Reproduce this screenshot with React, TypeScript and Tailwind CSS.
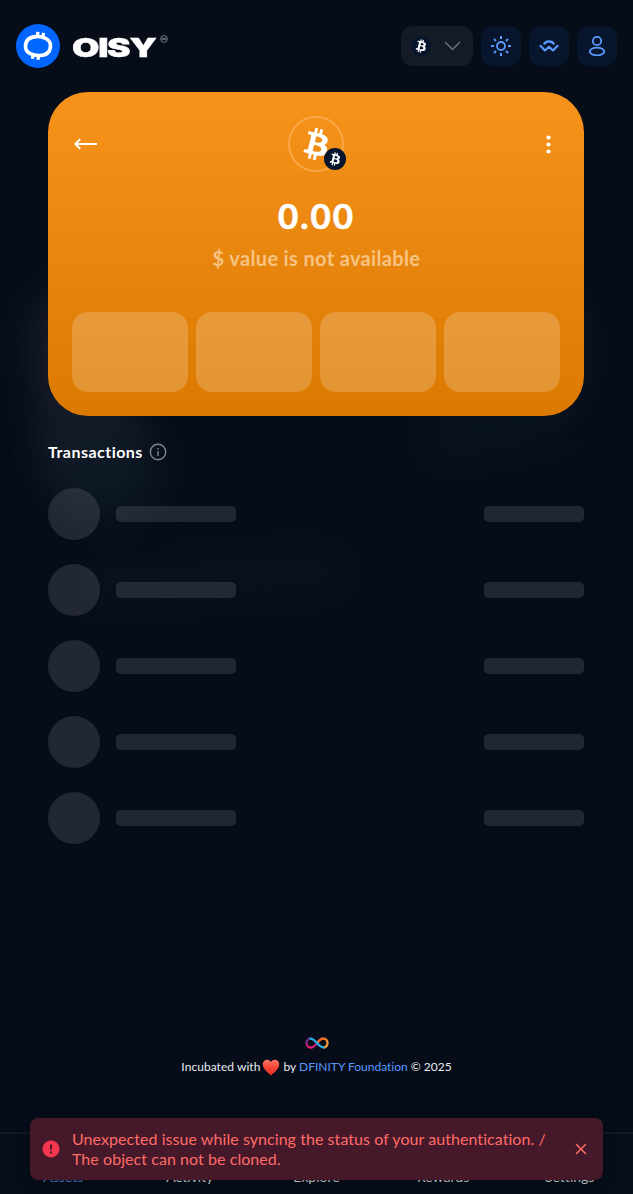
import React from 'react';

function BitcoinMark({ className }: { className?: string }) {
  return (
    <svg viewBox="0 0 32 32" fill="currentColor" className={className} aria-hidden="true">
      <path
        fillRule="evenodd"
        d="M23.189 14.02c.314-2.096-1.283-3.223-3.465-3.975l.708-2.84-1.728-.43-.69 2.765c-.454-.114-.92-.22-1.385-.326l.695-2.783L15.596 6l-.708 2.839c-.376-.086-.746-.17-1.104-.26l.002-.009-2.384-.595-.46 1.846s1.283.294 1.256.312c.7.175.826.638.805 1.006l-.806 3.235c.048.012.11.03.18.057l-.183-.045-1.13 4.532c-.086.212-.303.531-.793.41.018.025-1.256-.313-1.256-.313l-.858 1.978 2.25.561c.418.105.828.215 1.231.318l-.715 2.872 1.727.43.708-2.84c.472.127.93.245 1.378.357l-.706 2.828 1.728.43.715-2.866c2.948.558 5.164.333 6.097-2.333.752-2.146-.037-3.385-1.588-4.192 1.13-.26 1.98-1.003 2.207-2.538zm-3.95 5.538c-.533 2.147-4.148.986-5.32.695l.95-3.805c1.172.293 4.929.872 4.37 3.11zm.535-5.569c-.487 1.953-3.495.96-4.47.717l.86-3.45c.975.243 4.118.696 3.61 2.733z"
      />
    </svg>
  );
}

function Logo() {
  return (
    <div className="flex items-center">
      <svg width="44" height="44" viewBox="0 0 44 44" aria-hidden="true">
        <circle cx="22" cy="22" r="22" fill="#0066ff" />
        <g fill="none" stroke="#fff">
          <path
            d="M20 12.600C26 12.200 34.500 14.500 34.500 21.500C34.500 27.500 31.500 31.200 24 31.500C17.500 31.700 9.500 29.500 9.500 22.500C9.500 16.500 12.500 13 20 12.600Z"
            strokeWidth="3.600"
          />
          <path d="M21.900 7.900l-.4 3.700M27.600 8.900l-.6 3.500M17.100 31.200l-.7 3.600M22.500 32l-.5 3.700" strokeWidth="3.300" />
        </g>
      </svg>
      <div className="ml-[12px] w-[88px]">
        <div className="mt-[3px] origin-left scale-x-[1.36] text-[26px] leading-none font-black tracking-[-0.950px] text-white [font-family:Inter,sans-serif] [-webkit-text-stroke:0.400px_white]">
          OISY
        </div>
      </div>
      <svg width="8" height="8" viewBox="0 0 8 8" fill="none" stroke="#a6aab1" strokeWidth=".65" className="mb-[14px]" aria-hidden="true">
        <circle cx="4" cy="4" r="3.400" />
        <path d="M4 4C3 2.700 1.700 2.900 1.700 4S3 5.300 4 4s2.300-1.100 2.300 0S5 5.300 4 4z" />
      </svg>
    </div>
  );
}

function HeaderButton({ children }: { children: React.ReactNode }) {
  return (
    <button className="flex size-10 items-center justify-center rounded-xl bg-[#08162d] text-[#5a9aff]">
      {children}
    </button>
  );
}

function Header() {
  return (
    <header className="flex h-[92px] items-center justify-between px-4">
      <Logo />
      <div className="flex gap-2">
        <button className="flex h-10 w-[72px] items-center justify-between rounded-xl bg-[#141b27] pr-[12px] pl-[10px]">
          <span className="flex size-5 items-center justify-center rounded-full bg-[#07142d] text-white">
            <BitcoinMark className="size-[22px] shrink-0" />
          </span>
          <svg width="17" height="10" viewBox="0 0 17 10" fill="none" stroke="#656a73" strokeWidth="1.700" strokeLinecap="round" strokeLinejoin="round">
            <path d="M1.500 1.500l7 7 7-7" />
          </svg>
        </button>
        <HeaderButton>
          <svg width="20" height="20" viewBox="0 0 20 20" fill="none" stroke="currentColor" strokeWidth="2">
            <circle cx="10" cy="10" r="4" strokeWidth="1.800" />
            <path d="M10 0v3M10 17v3M0 10h3M17 10h3M3 3l2 2M15 15l2 2M3 17l2-2M15 5l2-2" />
          </svg>
        </HeaderButton>
        <HeaderButton>
          <svg width="20" height="20" viewBox="0 0 20 20" fill="none" stroke="currentColor" strokeWidth="2.100" strokeLinejoin="round">
            <path d="M.5 10h1.200l4.200 4.500L10 10.900l4.100 3.600 4.200-4.500h1.200" />
            <path d="M4.700 8.400c2.500-4 8.100-4 10.600 0" />
          </svg>
        </HeaderButton>
        <HeaderButton>
          <svg width="20" height="20" viewBox="0 0 20 20" fill="none" stroke="currentColor" strokeWidth="1.800">
            <circle cx="10" cy="5" r="4.200" />
            <ellipse cx="10" cy="15.500" rx="7.200" ry="3.900" />
          </svg>
        </HeaderButton>
      </div>
    </header>
  );
}

function BackgroundGlow() {
  return (
    <div className="pointer-events-none absolute inset-0 overflow-hidden">
      <div className="absolute top-[290px] left-[38px] h-[200px] w-[90px] -rotate-6 rounded-full bg-[#181b29] blur-[16px]" />
      <div className="absolute top-[410px] left-[50px] h-[110px] w-[110px] rounded-full bg-[#0d1a25] opacity-80 blur-[20px]" />
      <div className="absolute top-[290px] left-[510px] h-[120px] w-[75px] rounded-full bg-[#0a1822] blur-[14px]" />
      <div className="absolute top-[405px] left-[430px] h-[40px] w-[140px] -rotate-12 rounded-full bg-[#09131e] blur-[16px]" />
      <div className="absolute top-[560px] left-[80px] h-[35px] w-[260px] -rotate-3 rounded-full bg-[#0a111c] blur-[14px]" />
    </div>
  );
}

function BalanceCard() {
  return (
    <section className="flex h-[324px] flex-col rounded-[40px] bg-linear-to-b from-[#f7931a] to-[#db7900] p-6 text-white">
      <div className="grid h-14 grid-cols-[1fr_auto_1fr] items-center">
        <button className="ml-[1px] justify-self-start">
          <svg width="24" height="12" viewBox="0 0 24 12" fill="none" stroke="currentColor" strokeWidth="1.800">
            <path d="M2.500 6H24M7.300 1L2.300 6l5 5" />
          </svg>
        </button>
        <div className="relative flex size-14 items-center justify-center rounded-full border-2 border-[#f9a948]">
          <BitcoinMark className="size-[52px] shrink-0" />
          <span className="absolute right-[-4px] bottom-0 flex size-[22px] items-center justify-center rounded-full bg-[#07142d]">
            <BitcoinMark className="size-[22px] shrink-0" />
          </span>
        </div>
        <button className="mr-[9px] justify-self-end">
          <svg width="5" height="19" viewBox="0 0 5 19" fill="currentColor">
            <circle cx="2.500" cy="2.500" r="2.100" />
            <circle cx="2.500" cy="9.500" r="2.100" />
            <circle cx="2.500" cy="16.500" r="2.100" />
          </svg>
        </button>
      </div>
      <div className="mt-[21px] pl-px text-center text-[35px] leading-[44px] font-bold tracking-[1.900px] [-webkit-text-stroke:0.600px_white]">
        0.00
      </div>
      <div className="mt-[9px] pl-px text-center text-[20px] leading-[24px] font-bold tracking-[0.350px] text-[#f7c382]">
        $ value is not available
      </div>
      <div className="mt-auto grid grid-cols-4 gap-2">
        {[0, 1, 2, 3].map((i) => (
          <div key={i} className="h-20 rounded-2xl bg-white/20" />
        ))}
      </div>
    </section>
  );
}

function Transactions() {
  return (
    <section>
      <h2 className="mt-6 flex h-6 items-center gap-[6px] text-[16px] font-bold text-white">
        <span className="w-[95px] tracking-[0.480px] whitespace-nowrap">Transactions</span>
        <svg width="18" height="18" viewBox="0 0 18 18" fill="none" stroke="#80858d" strokeWidth="1.400">
          <circle cx="9" cy="9" r="7.700" />
          <path d="M9 8v5M9 5v1.500" />
        </svg>
      </h2>
      <div className="mt-6 flex flex-col gap-6">
        {[0, 1, 2, 3, 4].map((i) => (
          <div key={i} className="flex h-[52px] items-center">
            <div className="size-[52px] rounded-full bg-white/11" />
            <div className="ml-4 h-4 w-[120px] rounded-[5px] bg-white/11" />
            <div className="ml-auto h-4 w-[100px] rounded-[5px] bg-white/11" />
          </div>
        ))}
      </div>
    </section>
  );
}

function Heart() {
  return (
    <svg width="18" height="17" viewBox="0 0 18 17" className="mx-[2px]">
      <defs>
        <linearGradient id="heart" x1="0" y1="0" x2="0" y2="1">
          <stop stopColor="#ff7468" />
          <stop offset=".5" stopColor="#f94434" />
          <stop offset="1" stopColor="#d93224" />
        </linearGradient>
      </defs>
      <path fill="url(#heart)" d="M9 3C7.500.6 5.200.3 3.500 1 1.200 1.900.4 4.100.9 6.500 1.700 10.600 6 13.700 9 16.500c3-2.800 7.300-5.900 8.100-10 .5-2.400-.3-4.600-2.600-5.500C12.800.3 10.500.6 9 3z" />
    </svg>
  );
}

function Footer() {
  return (
    <footer className="mt-[192px] flex flex-col items-center">
      <svg width="24" height="14" viewBox="0 0 24 14" fill="none" strokeWidth="2.300">
        <defs>
          <linearGradient id="loopLeft" x1="0" y1="0" x2="0" y2="1">
            <stop stopColor="#4b2c8c" />
            <stop offset="1" stopColor="#ed1e79" />
          </linearGradient>
          <linearGradient id="loopRight" x1="0" y1="0" x2="1" y2="1">
            <stop stopColor="#f15a24" />
            <stop offset="1" stopColor="#fbb03b" />
          </linearGradient>
        </defs>
        <path stroke="url(#loopRight)" d="M12 7c2-2.400 3.700-4.500 6-4.500 2.700 0 4.500 2 4.500 4.500s-1.800 4.500-4.500 4.500" />
        <path stroke="url(#loopLeft)" d="M12 7c-2 2.400-3.700 4.500-6 4.500C3.300 11.500 1.500 9.500 1.500 7S3.300 2.500 6 2.500" />
        <path stroke="#29abe2" d="M4.500 2.700c3-.8 5.200 1.600 7.500 4.300s4.500 5.100 7.500 4.300" />
      </svg>
      <p className="mt-[7px] flex h-5 items-center text-[12px] whitespace-nowrap text-[#e8ebef]">
        <span className="tracking-[0.050px]">Incubated with</span>
        <Heart />
        <span className="ml-[1px]">
          by <span className="text-[#5a9aff]">DFINITY Foundation</span> © 2025
        </span>
      </p>
    </footer>
  );
}

const tabs = ['Assets', 'Activity', 'Explore', 'Rewards', 'Settings'];

function BottomNav() {
  return (
    <nav className="absolute inset-x-0 bottom-0 grid h-[62px] grid-cols-5 border-t-2 border-[#121924] bg-[#050e1a]">
      {tabs.map((label) => (
        <span key={label} className="pt-[33px] text-center text-[14px] leading-[20px] text-[#d2d5da] first:text-[#4b82df]">
          {label}
        </span>
      ))}
    </nav>
  );
}

function Toast() {
  return (
    <div className="absolute bottom-[14px] left-[30px] flex h-[62px] w-[573px] items-center rounded-lg bg-[#45182a] pr-[16px] pl-[12px] text-[#ff6c66] shadow-[0_4px_14px_rgba(0,0,0,0.25)]">
      <svg width="18" height="18" viewBox="0 0 18 18">
        <circle cx="9" cy="9" r="8.500" fill="#f5364f" />
        <path d="M9 4.500v5M9 11.500v2" stroke="#45182a" strokeWidth="2" />
      </svg>
      <p className="ml-[12px] text-[16px] leading-[20px] tracking-[0.060px] whitespace-nowrap">
        Unexpected issue while syncing the status of your authentication. /
        <br />
        The object can not be cloned.
      </p>
      <svg className="ml-auto" width="12" height="12" viewBox="0 0 12 12" stroke="currentColor" strokeWidth="1.500">
        <path d="M1 1l10 10M11 1L1 11" />
      </svg>
    </div>
  );
}

export default function App() {
  return (
    <div className="relative h-[1194px] w-full overflow-hidden bg-[#060d19] [font-family:Lato,sans-serif] [font-variant-ligatures:none]">
      <BackgroundGlow />
      <div className="relative">
        <Header />
        <main className="ml-12 w-[536px]">
          <BalanceCard />
          <Transactions />
        </main>
        <Footer />
      </div>
      <BottomNav />
      <Toast />
    </div>
  );
}
